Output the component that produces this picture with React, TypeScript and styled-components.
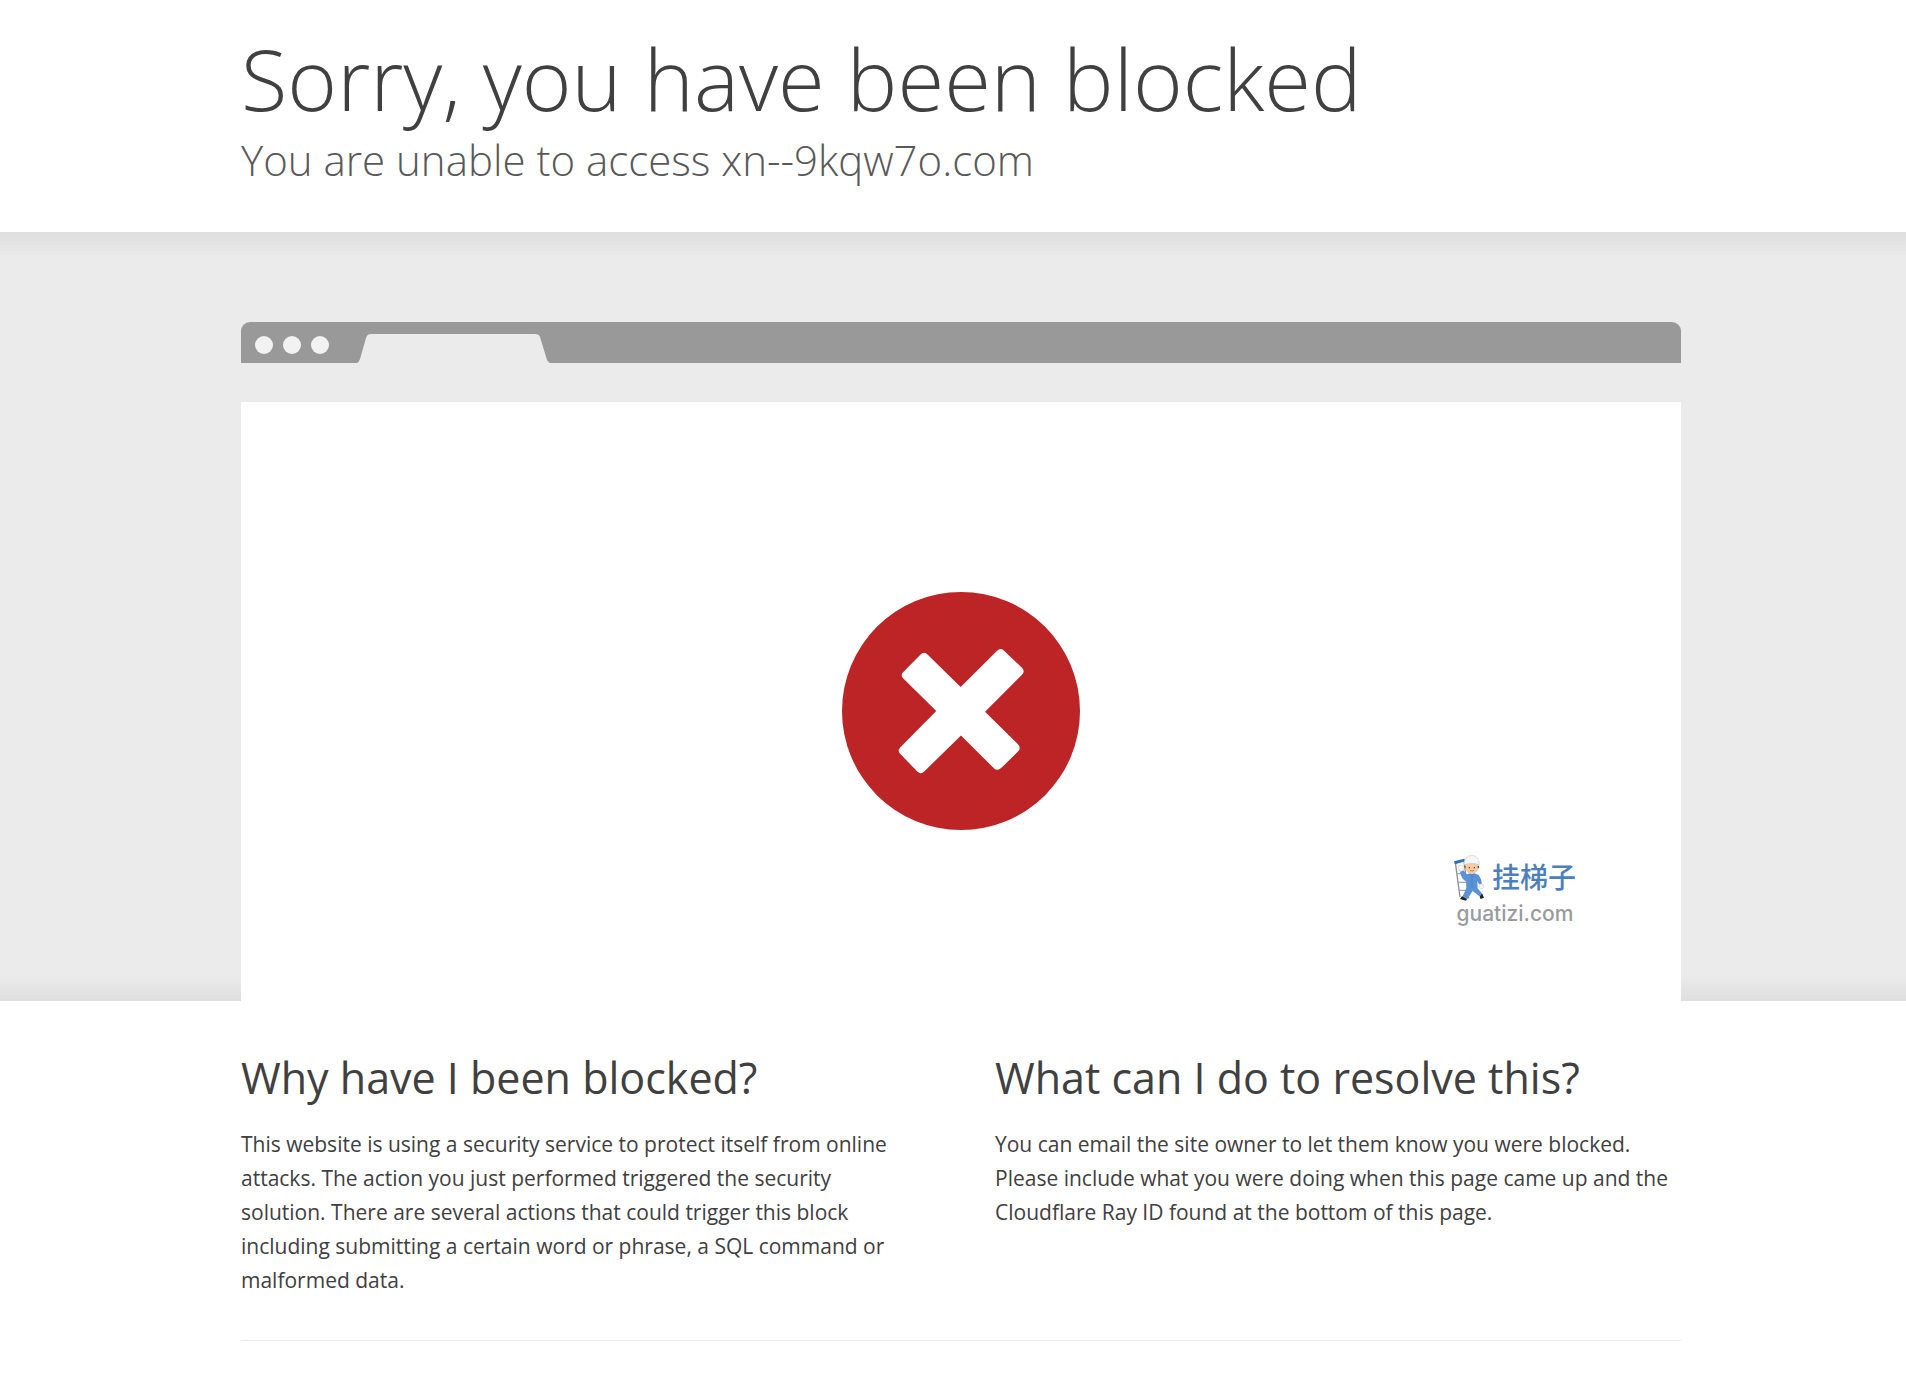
import React from "react";
import styled, { createGlobalStyle } from "styled-components";

const GlobalStyle = createGlobalStyle`
  *, *::before, *::after { box-sizing: border-box; }
  body {
    margin: 0;
    background: #fff;
    color: #404040;
    font-family: "Segoe UI", "Open Sans", "Noto Sans", sans-serif;
  }
  h1, h2, p { margin: 0; }
`;

const Wrapper = styled.div`
  width: 100%;
  max-width: 1456px;
  margin: 0 auto;
  padding-left: 16px;
`;

const Header = styled.header`
  display: flex;
  flex-direction: column;
  gap: 2px;
  padding: 30px 0 40px;
`;

const Title = styled.h1`
  font-size: 85px;
  font-weight: 300;
  line-height: 96px;
  color: #404040;
`;

const Subtitle = styled.h2`
  font-size: 42px;
  font-weight: 300;
  line-height: 64px;
  color: #595959;
`;

const Stage = styled.section`
  padding-top: 90px;
  background:
    linear-gradient(to bottom, #dedede, #ebebeb) top / 100% 26px no-repeat,
    linear-gradient(to top, #dedede, #ebebeb) bottom / 100% 26px no-repeat,
    #ebebeb;
`;

const Browser = styled.div`
  display: flex;
  flex-direction: column;
  gap: 39px;
`;

const BrowserBar = styled.div`
  display: flex;
  align-items: flex-end;
  height: 41px;
  overflow: hidden;
  border-radius: 9px 9px 0 0;
  background: #999;
`;

const Dots = styled.div`
  display: flex;
  align-self: center;
  gap: 10px;
  padding: 4px 28px 0 14px;
`;

const Dot = styled.span`
  width: 18px;
  height: 18px;
  border-radius: 50%;
  background: #f2f2f2;
`;

const TabShape = styled.svg`
  display: block;
  width: 193px;
  height: 30px;
`;

const Screen = styled.div`
  position: relative;
  display: flex;
  justify-content: center;
  padding: 190px 0 171px;
  background: #fff;
`;

const BlockedIcon = styled.svg`
  display: block;
  width: 238px;
  height: 238px;
`;

const Watermark = styled.div`
  position: absolute;
  right: 105px;
  bottom: 74px;
  display: flex;
  flex-direction: column;
  align-items: center;
`;

const WatermarkTop = styled.div`
  display: flex;
  align-items: flex-start;
  gap: 8px;
`;

const Worker = styled.svg`
  display: block;
  width: 30px;
  height: 46px;
`;

const BrandName = styled.span`
  font-family: "Noto Sans CJK SC", sans-serif;
  font-size: 28px;
  font-weight: 500;
  line-height: 42px;
  color: #4b80c0;
`;

const BrandSite = styled.span`
  font-family: Inter, "Liberation Sans", sans-serif;
  font-size: 21px;
  font-weight: 500;
  line-height: 26px;
  color: #999b9e;
`;

const Columns = styled.div`
  display: grid;
  grid-template-columns: 1fr 1fr;
  column-gap: 68px;
  padding: 47px 0 43px;
  border-bottom: 1px solid #ebebeb;
`;

const Heading = styled.h2`
  margin-bottom: 19px;
  font-size: 43px;
  font-weight: 400;
  line-height: 60px;
`;

const Paragraph = styled.p`
  padding-right: 10px;
  font-size: 21px;
  line-height: 34px;
`;

export default function App() {
  return (
    <>
      <GlobalStyle />
      <Wrapper>
        <Header>
          <Title>Sorry, you have been blocked</Title>
          <Subtitle>You are unable to access xn--9kqw7o.com</Subtitle>
        </Header>
      </Wrapper>
      <Stage>
        <Wrapper>
          <Browser>
            <BrowserBar>
              <Dots>
                <Dot />
                <Dot />
                <Dot />
              </Dots>
              <TabShape viewBox="0 0 193 30" aria-hidden="true">
                <path d="M0 30 C2 29 2 28 3 26 L9 5 Q10 1 14 1 H178 Q182 1 183 4 L190 27 Q191 29 193 30 Z" fill="#ebebeb" />
              </TabShape>
            </BrowserBar>
            <Screen>
              <BlockedIcon viewBox="66 65 712 712" role="img" aria-label="Blocked">
                <circle cx="422" cy="421" r="356" fill="#bd2426" />
                <path
                  d="M248 306 L301 252 Q311 242 321 251 L421 349 L530 241 Q540 231 550 240 L605 292 Q614 302 605 312 L494 423 L593 521 Q602 531 594 541 L543 591 Q532 601 522 594 L422 494 L312 602 Q302 612 292 603 L240 549 Q231 540 240 530 L348 421 L248 322 Q241 314 248 306 Z"
                  fill="#fff"
                />
              </BlockedIcon>
              <Watermark>
                <WatermarkTop>
                  <Worker viewBox="0 0 90 138" aria-hidden="true">
                    <path d="M4 22 L18 126 M30 18 L44 130" stroke="#8b9198" strokeWidth="4" fill="none" />
                    <path d="M7 56 H32 M10 82 H36 M14 106 H38" stroke="#a3a8ae" strokeWidth="4" />
                    <path d="M0 19 L31 11 L34 19 L3 28 Z" fill="#2f6db4" />
                    <path d="M38 58 Q58 50 74 60 Q82 70 84 86 L75 88 L70 78 L71 100 L88 120 L80 127 L56 108 L40 132 L25 125 L37 100 L38 80 Q22 74 18 50 L28 46 Z" fill="#5a92d6" />
                    <path d="M46 54 L54 64 L62 54 M54 64 V98" stroke="#3f78bd" strokeWidth="2" fill="none" />
                    <circle cx="53" cy="37" r="20" fill="#f8c9a2" />
                    <path d="M33 32 V40 M73 32 V40" stroke="#7a4a2c" strokeWidth="4" />
                    <path d="M30 29 Q31 2 53 1 Q76 3 76 29 Q54 21 30 29 Z" fill="#f5f6f8" stroke="#c9cdd2" strokeWidth="2" />
                    <circle cx="46" cy="38" r="2" fill="#333" />
                    <circle cx="61" cy="38" r="2" fill="#333" />
                    <path d="M48 46 Q54 51 60 46" stroke="#b84b3a" strokeWidth="2" fill="none" />
                    <circle cx="21" cy="39" r="9" fill="#f7f7f7" stroke="#cfd2d6" strokeWidth="2" />
                    <circle cx="82" cy="94" r="7" fill="#f7f7f7" stroke="#cfd2d6" strokeWidth="2" />
                    <path d="M24 124 L39 132 L36 137 L18 132 Z M84 116 L90 128 L80 132 L77 126 Z" fill="#222" />
                  </Worker>
                  <BrandName lang="zh-CN">挂梯子</BrandName>
                </WatermarkTop>
                <BrandSite>guatizi.com</BrandSite>
              </Watermark>
            </Screen>
          </Browser>
        </Wrapper>
      </Stage>
      <Wrapper>
        <Columns>
          <div>
            <Heading>Why have I been blocked?</Heading>
            <Paragraph>
              This website is using a security service to protect itself from online attacks. The action you just
              performed triggered the security solution. There are several actions that could trigger this block
              including submitting a certain word or phrase, a SQL command or malformed data.
            </Paragraph>
          </div>
          <div>
            <Heading>What can I do to resolve this?</Heading>
            <Paragraph>
              You can email the site owner to let them know you were blocked. Please include what you were doing when
              this page came up and the Cloudflare Ray ID found at the bottom of this page.
            </Paragraph>
          </div>
        </Columns>
      </Wrapper>
    </>
  );
}
